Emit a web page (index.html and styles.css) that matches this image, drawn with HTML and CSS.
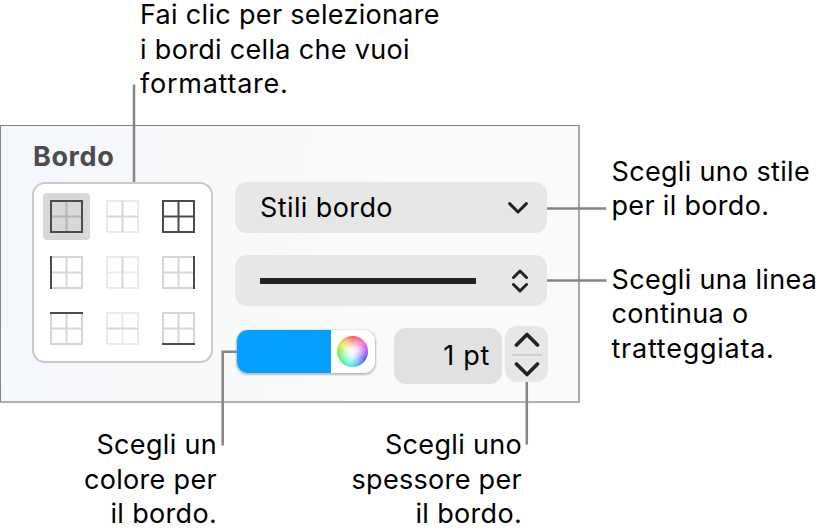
FILE: index.html
```html
<!DOCTYPE html>
<html lang="it">
<head>
    <meta charset="UTF-8">
    <meta name="viewport" content="width=device-width, initial-scale=1.0">
    <title>Bordo</title>
    <link rel="stylesheet" href="styles.css">
</head>
<body>

<!-- Shapes shared by the border buttons -->
<svg class="defs" width="0" height="0">
    <symbol id="frame" viewBox="0 0 33 33">
        <rect x="1" y="1" width="31" height="31" fill="none" stroke="currentColor" stroke-width="2"/>
    </symbol>
    <symbol id="vline" viewBox="0 0 33 33">
        <path d="M16.5 1v31" fill="none" stroke="currentColor" stroke-width="2"/>
    </symbol>
    <symbol id="hline" viewBox="0 0 33 33">
        <path d="M1 16.5h31" fill="none" stroke="currentColor" stroke-width="2"/>
    </symbol>
</svg>

<div class="figure">
    <p class="note note-top">Fai clic per selezionare<br>i bordi cella che vuoi<br><span class="loose">formattare.</span></p>

    <div class="middle">
        <div class="panel">
            <h3>Bordo</h3>
            <div class="controls">
                <div class="borders">
                    <div class="cell selected"><svg class="icon"><use href="#vline" class="mid"/><use href="#hline" class="mid"/><use href="#frame" class="dark"/></svg></div>
                    <div class="cell"><svg class="icon"><use href="#frame" class="faint"/><use href="#vline" class="light"/><use href="#hline" class="light"/></svg></div>
                    <div class="cell"><svg class="icon"><use href="#vline" class="dark"/><use href="#hline" class="dark"/><use href="#frame" class="dark"/></svg></div>

                    <div class="cell"><svg class="icon"><use href="#vline" class="light"/><use href="#hline" class="light"/><use href="#frame" class="light"/><path class="edge" d="M1 0v33"/></svg></div>
                    <div class="cell"><svg class="icon"><use href="#frame" class="faint"/><use href="#hline" class="faint"/><use href="#vline" class="light"/></svg></div>
                    <div class="cell"><svg class="icon"><use href="#vline" class="light"/><use href="#hline" class="light"/><use href="#frame" class="light"/><path class="edge" d="M32 0v33"/></svg></div>

                    <div class="cell"><svg class="icon"><use href="#vline" class="light"/><use href="#hline" class="light"/><use href="#frame" class="light"/><path class="edge" d="M0 1h33"/></svg></div>
                    <div class="cell"><svg class="icon"><use href="#frame" class="faint"/><use href="#vline" class="faint"/><use href="#hline" class="light"/></svg></div>
                    <div class="cell"><svg class="icon"><use href="#vline" class="light"/><use href="#hline" class="light"/><use href="#frame" class="light"/><path class="edge" d="M0 32h33"/></svg></div>
                </div>

                <div class="options">
                    <div class="select">
                        <span>Stili bordo</span>
                        <svg class="chevron" width="20" height="12" viewBox="0 0 20 12"><path d="M1.6 1.6 10 10l8.4-8.4"/></svg>
                    </div>
                    <div class="select">
                        <div class="stroke"></div>
                        <svg class="updown" width="16" height="24" viewBox="0 0 16 24"><path d="M1.5 8.5 8 2l6.5 6.5M1.5 15.5 8 22l6.5-6.5"/></svg>
                    </div>
                    <div class="row">
                        <div class="color-well">
                            <div class="swatch"></div>
                            <div class="wheel"></div>
                        </div>
                        <div class="size">1 pt</div>
                        <div class="stepper">
                            <svg width="26" height="15" viewBox="0 0 26 15"><path d="M2.5 13 13 2.5 23.5 13"/></svg>
                            <hr>
                            <svg width="26" height="15" viewBox="0 0 26 15"><path d="M2.5 2 13 12.5 23.5 2"/></svg>
                        </div>
                    </div>
                </div>
            </div>
        </div>

        <div class="side">
            <p class="note">Scegli uno stile<br>per il bordo.</p>
            <p class="note">Scegli una linea<br>continua o<br><span class="loose">tratteggiata.</span></p>
        </div>
    </div>

    <div class="bottom">
        <p class="note note-color">Scegli un<br>colore per<br>il bordo.</p>
        <p class="note note-size">Scegli uno<br>spessore per<br>il bordo.</p>
    </div>

    <!-- Leader lines from the notes to the controls -->
    <svg class="leaders" width="830" height="532" viewBox="0 0 830 532">
        <path d="M134 84.5V182M547 208.5h59M547 280.5h59.5M237 351.8h-14.3V445.5M526.8 382v62.5"/>
    </svg>
</div>

</body>
</html>
```

FILE: styles.css
```css
body {
    margin: 0;
    background-color: white;
    font-family: Inter, "Liberation Sans", sans-serif;
    color: #000;
}

.defs {
    display: block;
}

.figure {
    position: relative;
    width: 830px;
    height: 532px;
    overflow: hidden;
    display: grid;
    grid-template-rows: 125px 278px 129px;
}

.note {
    margin: 0;
    font-size: 27px;
    line-height: 34.6px;
    letter-spacing: 0.32px;
    white-space: nowrap;
}

.note .loose {
    letter-spacing: 0.75px;
}

.note-top {
    margin: -2px 0 0 140px;
}

.middle {
    display: flex;
}

.panel {
    box-sizing: border-box;
    width: 580px;
    height: 278px;
    padding: 14px 0 0 31px;
    border: 1px solid #858585;
    border-right: 2px solid #a8a8a8;
    border-bottom: 2px solid #b0b0b2;
    background: linear-gradient(100deg, #f3f8fd 0%, #f7f8fb 20%, #f8faf9 50%, #fafafa 80%);
}

h3 {
    margin: 0 0 8px 1px;
    font-size: 27px;
    line-height: 34px;
    font-weight: 700;
    letter-spacing: 0.6px;
    color: #4c4c4d;
}

.controls {
    display: flex;
    gap: 22px;
}

.borders {
    box-sizing: border-box;
    width: 181px;
    height: 181px;
    padding: 8px;
    display: grid;
    grid-template-columns: repeat(3, 47px);
    grid-template-rows: repeat(3, 47px);
    justify-content: center;
    align-content: center;
    gap: 9px;
    border: 2px solid #c9c9cc;
    border-radius: 13px;
    background-color: white;
}

.cell {
    display: flex;
    justify-content: center;
    align-items: center;
    border-radius: 4px;
}

.selected {
    background-color: #d8d8d8;
}

.icon {
    width: 33px;
    height: 33px;
}

.dark {
    color: #4b4b4d;
}

.mid {
    color: #b5b5b5;
}

.light {
    color: #d6d6d6;
}

.faint {
    color: #ebebeb;
}

.edge {
    fill: none;
    stroke: #4b4b4d;
    stroke-width: 2;
}

.options {
    width: 312px;
    display: flex;
    flex-direction: column;
}

.select {
    box-sizing: border-box;
    height: 51px;
    margin-bottom: 22px;
    padding: 0 19px 0 25px;
    display: flex;
    justify-content: space-between;
    align-items: center;
    border-radius: 12px;
    background-color: #e7e7e7;
    font-size: 27px;
    letter-spacing: 0.4px;
}

.stroke {
    width: 216px;
    height: 6px;
    background-color: #222;
}

svg path {
    stroke-linejoin: round;
}

.chevron path, .updown path, .stepper path {
    fill: none;
    stroke: #222;
    stroke-width: 3;
    stroke-linecap: round;
}

.stepper path {
    stroke-width: 3.6;
}

.row {
    margin-top: -2px;
    display: flex;
    align-items: flex-start;
}

.color-well, .size, .stepper {
    flex-shrink: 0;
}

.color-well {
    width: 138px;
    height: 43px;
    margin: 4px 19px 0 2px;
    display: flex;
    border-radius: 11px;
    overflow: hidden;
    background-color: white;
    box-shadow: 0 1px 2px 1px rgba(0, 0, 0, 0.25);
}

.swatch {
    width: 94px;
    background-color: #05a0ff;
}

.wheel {
    width: 31px;
    height: 31px;
    margin: 6px 0 0 6px;
    border-radius: 50%;
    background:
        radial-gradient(circle closest-side, #fff 0%, rgba(255, 255, 255, 0.75) 40%, rgba(255, 255, 255, 0) 100%),
        conic-gradient(#ff4d4d, #ff5cc8 50deg, #b44dff 85deg, #5050f0 120deg, #45b5ff 160deg, #4df0f0 190deg, #4df08c 225deg, #6cf04d 265deg, #e0e84d 305deg, #ff9a4d 335deg, #ff4d4d);
}

.size {
    box-sizing: border-box;
    width: 108px;
    height: 56px;
    margin: 2px 3px 0 0;
    padding-right: 12px;
    border-radius: 12px;
    background-color: #e1e1e1;
    font-size: 27px;
    line-height: 55px;
    letter-spacing: 0.7px;
    text-align: right;
}

.stepper {
    box-sizing: border-box;
    width: 43px;
    height: 56px;
    padding: 6px 0 5px;
    display: flex;
    flex-direction: column;
    align-items: center;
    justify-content: space-between;
    border-radius: 12px;
    background-color: #e7e7e7;
}

.stepper hr {
    width: 30px;
    height: 2px;
    margin: 0;
    border: none;
    background-color: #cfcfcf;
}

.side {
    padding: 29.5px 0 0 31.5px;
    display: flex;
    flex-direction: column;
    gap: 39px;
}

.bottom {
    padding-top: 25px;
    display: flex;
    text-align: right;
}

.note-color {
    width: 217px;
}

.note-size {
    width: 305px;
}

.leaders {
    position: absolute;
    top: 0;
    left: 0;
}

.leaders path {
    fill: none;
    stroke: #858585;
    stroke-width: 2.5;
    stroke-linejoin: miter;
}
```
